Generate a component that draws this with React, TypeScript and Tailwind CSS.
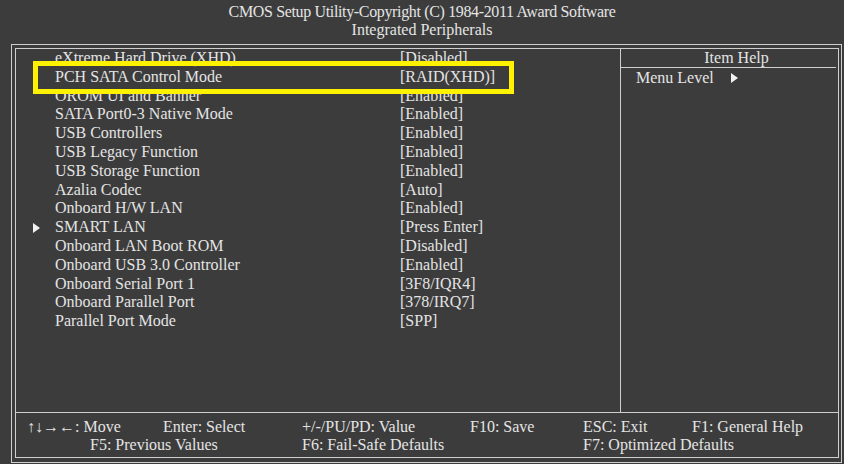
const rows: { label: string; value: string; sub?: boolean }[] = [
  { label: "eXtreme Hard Drive (XHD)", value: "[Disabled]" },
  { label: "PCH SATA Control Mode", value: "[RAID(XHD)]" },
  { label: "OROM UI and Banner", value: "[Enabled]" },
  { label: "SATA Port0-3 Native Mode", value: "[Enabled]" },
  { label: "USB Controllers", value: "[Enabled]" },
  { label: "USB Legacy Function", value: "[Enabled]" },
  { label: "USB Storage Function", value: "[Enabled]" },
  { label: "Azalia Codec", value: "[Auto]" },
  { label: "Onboard H/W LAN", value: "[Enabled]" },
  { label: "SMART LAN", value: "[Press Enter]", sub: true },
  { label: "Onboard LAN Boot ROM", value: "[Disabled]" },
  { label: "Onboard USB 3.0 Controller", value: "[Enabled]" },
  { label: "Onboard Serial Port 1", value: "[3F8/IQR4]" },
  { label: "Onboard Parallel Port", value: "[378/IRQ7]" },
  { label: "Parallel Port Mode", value: "[SPP]" },
];

function Triangle({ className }: { className?: string }) {
  return (
    <svg className={className} width="7" height="10" viewBox="0 0 7 10">
      <path d="M0 0 L7 5 L0 10 Z" fill="#f2f2f2" />
    </svg>
  );
}

export default function App() {
  return (
    <div
      className="w-[844px] h-[464px] bg-[#3c3c3c] text-[#e4e4e4] text-[16px] overflow-hidden"
      style={{ fontFamily: '"Liberation Serif", "DejaVu Serif", serif' }}
    >
      {/* title */}
      <div className="h-[44px] pt-[3px] text-center leading-[18px]">
        <div className="tracking-[-0.35px]">CMOS Setup Utility-Copyright (C) 1984-2011 Award Software</div>
        <div>Integrated Peripherals</div>
      </div>

      {/* double frame */}
      <div className="ml-[11px] w-[831px] h-[419px] border border-[#cfcfcf] pl-[3px] pr-[2px] pt-[3px] pb-[4px]">
        <div className="h-full border border-[#cfcfcf] flex flex-col">
          <div className="h-[364px] flex border-b border-[#cfcfcf]">
            <div className="relative w-[605px] border-r border-[#cfcfcf] leading-[18.8px]">
              {rows.map((r) => (
                <div key={r.label} className="flex items-center h-[18.8px]">
                  <div className="w-[39px] flex items-center">
                    {r.sub && <Triangle className="ml-[17px]" />}
                  </div>
                  <div className="w-[345px] whitespace-nowrap">{r.label}</div>
                  <div className="whitespace-nowrap">{r.value}</div>
                </div>
              ))}
              {/* selection highlight */}
              <div className="absolute left-[17px] top-[12px] w-[481px] h-[33px] border-[5px] border-[#fff200]" />
            </div>
            <div className="flex-1">
              <div className="h-[19px] mr-[2px] border-b border-[#cfcfcf] text-center leading-[18px] pl-[16px]">
                Item Help
              </div>
              <div className="flex items-center h-[19px] pl-[15px]">
                <span>Menu Level</span>
                <Triangle className="ml-[17px]" />
              </div>
            </div>
          </div>

          <div className="pt-[5px] leading-[18px] whitespace-nowrap">
            <div className="flex pl-[11px]">
              <span className="w-[136px]">↑↓→←: Move</span>
              <span className="w-[139px]">Enter: Select</span>
              <span className="w-[168px]">+/-/PU/PD: Value</span>
              <span className="w-[113px]">F10: Save</span>
              <span className="w-[109px]">ESC: Exit</span>
              <span>F1: General Help</span>
            </div>
            <div className="flex pl-[74px]">
              <span className="w-[212px]">F5: Previous Values</span>
              <span className="w-[281px]">F6: Fail-Safe Defaults</span>
              <span>F7: Optimized Defaults</span>
            </div>
          </div>
        </div>
      </div>
    </div>
  );
}
